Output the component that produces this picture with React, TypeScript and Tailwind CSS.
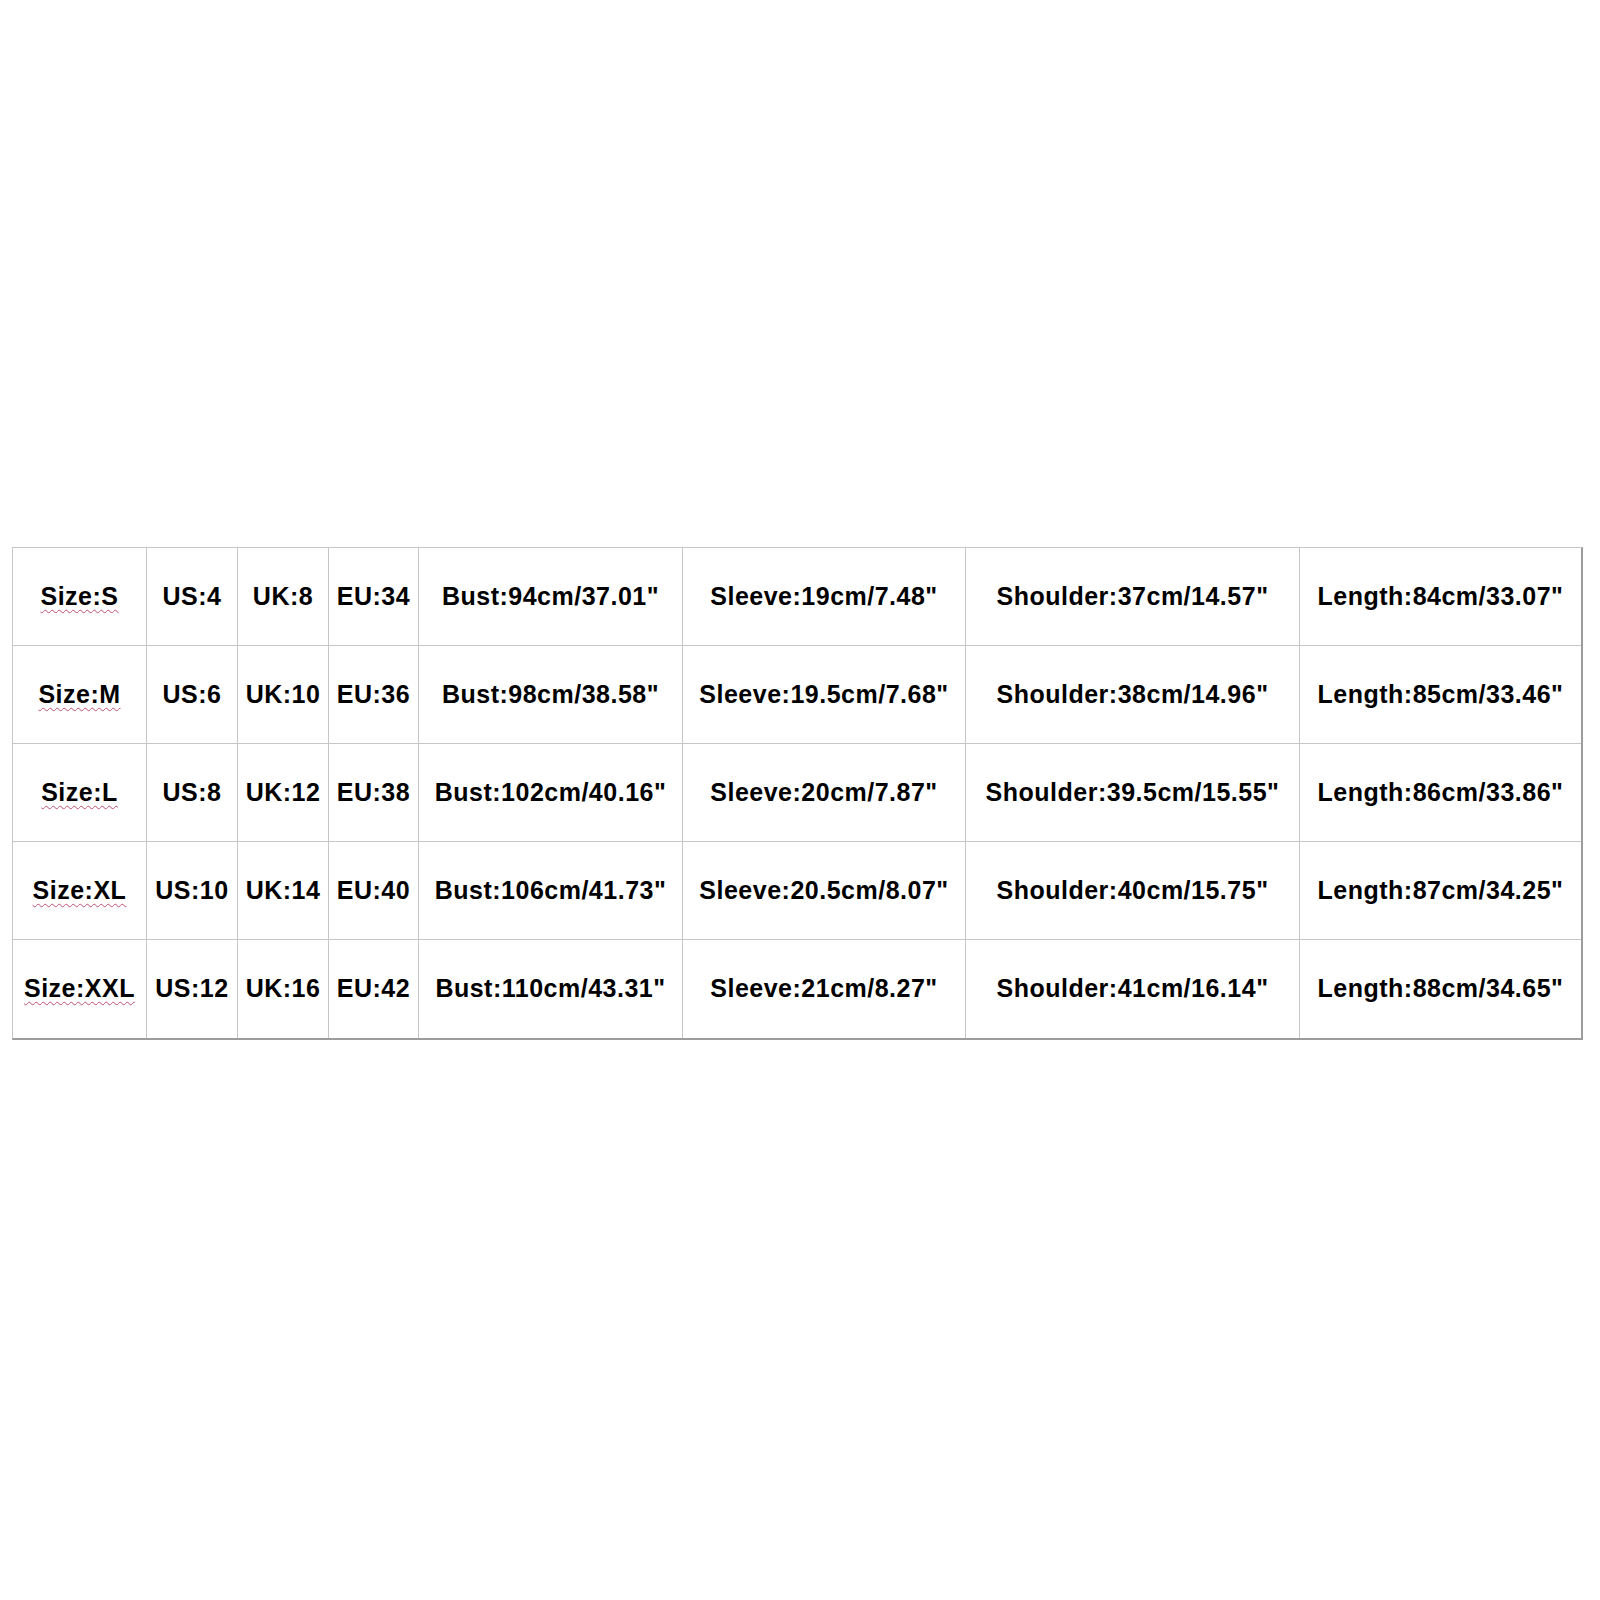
const rows = [
  ['Size:S', 'US:4', 'UK:8', 'EU:34', 'Bust:94cm/37.01"', 'Sleeve:19cm/7.48"', 'Shoulder:37cm/14.57"', 'Length:84cm/33.07"'],
  ['Size:M', 'US:6', 'UK:10', 'EU:36', 'Bust:98cm/38.58"', 'Sleeve:19.5cm/7.68"', 'Shoulder:38cm/14.96"', 'Length:85cm/33.46"'],
  ['Size:L', 'US:8', 'UK:12', 'EU:38', 'Bust:102cm/40.16"', 'Sleeve:20cm/7.87"', 'Shoulder:39.5cm/15.55"', 'Length:86cm/33.86"'],
  ['Size:XL', 'US:10', 'UK:14', 'EU:40', 'Bust:106cm/41.73"', 'Sleeve:20.5cm/8.07"', 'Shoulder:40cm/15.75"', 'Length:87cm/34.25"'],
  ['Size:XXL', 'US:12', 'UK:16', 'EU:42', 'Bust:110cm/43.31"', 'Sleeve:21cm/8.27"', 'Shoulder:41cm/16.14"', 'Length:88cm/34.65"'],
];

export default function App() {
  return (
    <div className="h-[1600px] w-[1600px] bg-white pt-[547px] pl-[12px] font-['Liberation_Sans',Arial,sans-serif]">
      {/* size chart */}
      <div className="grid w-fit grid-cols-[134px_91px_91px_90px_264px_283px_334px_281px] border-t border-l border-r-2 border-b-2 border-t-[#c6c6c6] border-l-[#c6c6c6] border-r-[#9c9c9c] border-b-[#9c9c9c]">
        {rows.map((row, r) =>
          row.map((cell, c) => (
            <div
              key={r + '-' + c}
              className={
                'flex h-[98px] items-center justify-center whitespace-nowrap border-[#c6c6c6] text-[25px] font-bold tracking-[0.5px] text-black ' +
                (c < 7 ? 'border-r ' : '') +
                (r < 4 ? 'border-b' : 'h-[96px]')
              }
            >
              {c === 0 ? (
                <span className="underline decoration-wavy decoration-[#c0506e] decoration-1 underline-offset-[4px]">
                  {cell}
                </span>
              ) : (
                cell
              )}
            </div>
          ))
        )}
      </div>
    </div>
  );
}
